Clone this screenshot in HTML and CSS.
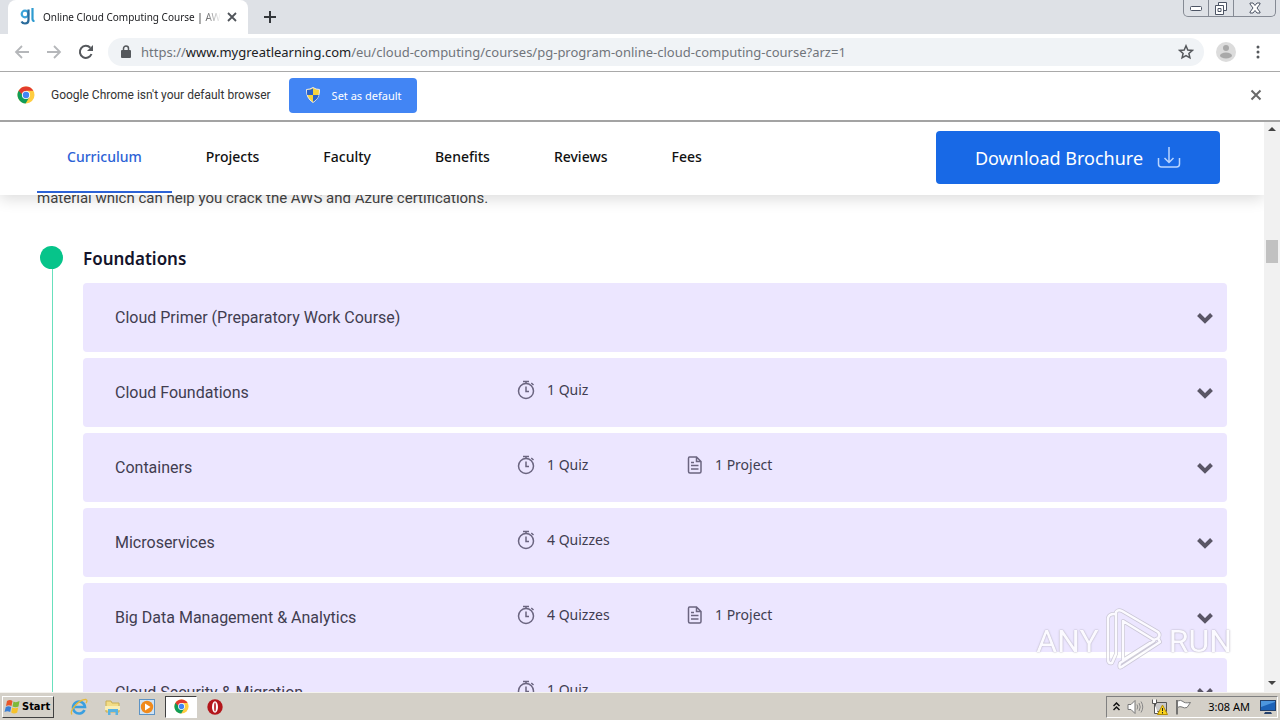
FILE: index.html
```html
<!DOCTYPE html>
<html lang="en">
<head>
<meta charset="utf-8">
<title>Online Cloud Computing Course</title>
<link rel="stylesheet" href="styles.css">
</head>
<body>
<svg class="defs" aria-hidden="true">
  <symbol id="chrome" viewBox="0 0 18 18">
    <circle cx="9" cy="9" r="8.5" fill="#ffcd40"/>
    <path d="M1.600 4.800A8.500 8.500 0 0 0 8.600 17.500L12.500 11 9 9 9 4.800Z" fill="#109d58"/>
    <path d="M1.600 4.800A8.500 8.500 0 0 1 16.400 4.800H9L5.200 8.400Z" fill="#e33b2e"/>
    <circle cx="9" cy="9" r="4.1" fill="#fff"/><circle cx="9" cy="9" r="3.2" fill="#4285f4"/>
  </symbol>
  <symbol id="timer" viewBox="0 0 18 20">
    <g fill="none" stroke="#6b6580" stroke-width="1.5"><circle cx="9" cy="11" r="7.5"/><path d="M9 6.500V11.500H12M6 1.500H12M9 1.500V3M14.300 3 16.500 5"/></g>
  </symbol>
  <symbol id="doc" viewBox="0 0 16 18">
    <g fill="none" stroke="#6b6580" stroke-width="1.500"><path d="M2.500 1H9.500L14 5.500V15.500Q14 17 12.500 17H3Q1.500 17 1.500 15.500V2.500Q1.500 1 2.500 1ZM9.500 1V5.500H14M4 6.500H7M4 9.500H11.500M4 13H11.500"/></g>
  </symbol>
  <symbol id="chev" viewBox="0 0 18 12"><path d="M2.500 2.500 9 9 15.500 2.500" fill="none" stroke="#5a5666" stroke-width="4"/></symbol>
</svg>

<header class="tabs">
  <div class="tab">
    <svg class="favicon" width="16" height="18" viewBox="0 0 16 18"><g fill="none" stroke-width="2.200"><circle cx="5" cy="6" r="3.300" stroke="#3ba4da"/><path d="M8.500 1.500V12Q8.500 15.500 5 15.500Q2.500 15.500 1.500 13.500" stroke="#2b6c9c"/><path d="M12.500 0V11Q12.500 13 14.500 13" stroke="#2e9bd0"/></g></svg>
    <span class="tab-title">Online Cloud Computing Course | AW</span>
    <button class="plain" aria-label="Close tab"><svg width="10" height="10" viewBox="0 0 10 10"><path d="M1 1 9 9M9 1 1 9" stroke="#50545a" stroke-width="1.800"/></svg></button>
  </div>
  <button class="plain new-tab" aria-label="New tab"><svg width="12" height="12" viewBox="0 0 12 12"><path d="M6 0V12M0 6H12" stroke="#33363b" stroke-width="2"/></svg></button>
  <div class="win">
    <button aria-label="Minimize"><svg width="14" height="8" viewBox="0 0 14 8"><rect x="1.500" y="2.500" width="11" height="4" rx="1" fill="#fff" stroke="#4c5464"/></svg></button>
    <button aria-label="Restore"><svg width="14" height="13" viewBox="0 0 14 13"><g fill="#fff" stroke="#4c5464"><path d="M4.500.5H12.500V8.500H4.500Z"/><path d="M1.500 3.500H9.500V12.500H1.500ZM4 6.500H7V9.500H4Z"/></g></svg></button>
    <button class="wide" aria-label="Close window"><svg width="14" height="12" viewBox="0 0 14 12"><path d="M2 1H5L7 3.500 9 1H12V2L9 6 12 10V11H9L7 8.500 5 11H2V10L5 6 2 2Z" fill="#fff" stroke="#4c5464"/></svg></button>
  </div>
</header>

<div class="toolbar">
  <button class="plain" aria-label="Back"><svg width="16" height="16" viewBox="0 0 16 16"><path d="M15 8H2M8 2 2 8 8 14" fill="none" stroke="#b5b7ba" stroke-width="1.800"/></svg></button>
  <button class="plain" aria-label="Forward"><svg width="16" height="16" viewBox="0 0 16 16"><path d="M1 8H14M8 2 14 8 8 14" fill="none" stroke="#b5b7ba" stroke-width="1.800"/></svg></button>
  <button class="plain" aria-label="Reload"><svg width="16" height="16" viewBox="0 0 16 16"><path d="M13.500 10A6 6 0 1 1 12.300 3.800" fill="none" stroke="#55585c" stroke-width="2"/><path d="M15 1V7H9Z" fill="#55585c"/></svg></button>
  <div class="address">
    <svg width="10" height="13" viewBox="0 0 10 13"><rect y="5" width="10" height="8" rx="1" fill="#55585c"/><path d="M2.500 5V3.500a2.500 2.500 0 0 1 5 0V5" fill="none" stroke="#55585c" stroke-width="1.500"/></svg>
    <div class="url">https://<b>www.mygreatlearning.com</b>/eu/cloud-computing/courses/pg-program-online-cloud-computing-course?arz=1</div>
    <button class="plain" aria-label="Bookmark"><svg width="16" height="16" viewBox="0 0 16 16"><path d="M8 1.800 9.800 6 14.300 6.400 10.900 9.400 11.900 13.800 8 11.500 4.100 13.800 5.100 9.400 1.700 6.400 6.200 6Z" fill="none" stroke="#55585c" stroke-width="1.500"/></svg></button>
  </div>
  <button class="plain" aria-label="Profile"><svg width="20" height="20" viewBox="0 0 20 20"><circle cx="10" cy="10" r="10" fill="#dcdcdc"/><circle cx="10" cy="6" r="3" fill="#a9a9a9"/><ellipse cx="10" cy="13.500" rx="6" ry="3" fill="#a9a9a9"/></svg></button>
  <button class="plain dots" aria-label="Menu"><svg width="4" height="14" viewBox="0 0 4 14"><g fill="#55585c"><circle cx="2" cy="2" r="1.500"/><circle cx="2" cy="7" r="1.500"/><circle cx="2" cy="12" r="1.500"/></g></svg></button>
</div>

<div class="infobar">
  <svg width="18" height="18"><use href="#chrome"/></svg>
  <span class="info-text">Google Chrome isn't your default browser</span>
  <button class="default-btn"><svg width="14" height="16" viewBox="0 0 14 16"><path d="M7 .5Q10 2.500 13.500 2.500 14 11 7 15.500 0 11 .5 2.500 4 2.500 7 .5Z" fill="#f5d33c" stroke="#e9e9ee"/><path d="M7 1.500V8H1.200Q.8 6 1 3 4.500 3 7 1.500ZM7 8H12.800Q11.500 12.500 7 14.800Z" fill="#2a62c9"/></svg>Set as default</button>
  <button class="plain info-close" aria-label="Dismiss"><svg width="12" height="12" viewBox="0 0 12 12"><path d="M1.500 1.500 10.500 10.500M10.500 1.500 1.500 10.500" stroke="#6a6a6a" stroke-width="2"/></svg></button>
</div>

<div class="viewport">
  <div class="page">
    <div class="nav">
      <nav>
        <a class="active" href="#c">Curriculum</a><a href="#p">Projects</a><a href="#f">Faculty</a><a href="#b">Benefits</a><a href="#r">Reviews</a><a href="#e">Fees</a>
      </nav>
      <button class="brochure">Download Brochure <svg width="24" height="22" viewBox="0 0 24 22"><path d="M1.500 11V17Q1.500 20 4.500 20H19.500Q22.500 20 22.500 17V11M12 0V15M7.500 11 12 15.500 16.500 11" fill="none" stroke="#b9d5ff" stroke-width="1.500"/></svg></button>
    </div>
    <main>
      <p class="intro">material which can help you crack the AWS and Azure certifications.</p>
      <section class="module">
        <div class="rail"></div>
        <div class="module-body">
          <h2>Foundations</h2>
          <ul>
            <li><span class="name">Cloud Primer (Preparatory Work Course)</span><span class="meta"></span><span class="meta"></span><button class="plain" aria-label="Expand Cloud Primer"><svg width="18" height="12"><use href="#chev"/></svg></button></li>
            <li><span class="name">Cloud Foundations</span><span class="meta"><svg width="18" height="20"><use href="#timer"/></svg>1 Quiz</span><span class="meta"></span><button class="plain" aria-label="Expand Cloud Foundations"><svg width="18" height="12"><use href="#chev"/></svg></button></li>
            <li><span class="name">Containers</span><span class="meta"><svg width="18" height="20"><use href="#timer"/></svg>1 Quiz</span><span class="meta"><svg width="16" height="18"><use href="#doc"/></svg>1 Project</span><button class="plain" aria-label="Expand Containers"><svg width="18" height="12"><use href="#chev"/></svg></button></li>
            <li><span class="name">Microservices</span><span class="meta"><svg width="18" height="20"><use href="#timer"/></svg>4 Quizzes</span><span class="meta"></span><button class="plain" aria-label="Expand Microservices"><svg width="18" height="12"><use href="#chev"/></svg></button></li>
            <li><span class="name">Big Data Management &amp; Analytics</span><span class="meta"><svg width="18" height="20"><use href="#timer"/></svg>4 Quizzes</span><span class="meta"><svg width="16" height="18"><use href="#doc"/></svg>1 Project</span><button class="plain" aria-label="Expand Big Data"><svg width="18" height="12"><use href="#chev"/></svg></button></li>
            <li><span class="name">Cloud Security &amp; Migration</span><span class="meta"><svg width="18" height="20"><use href="#timer"/></svg>1 Quiz</span><span class="meta"></span><button class="plain" aria-label="Expand Cloud Security"><svg width="18" height="12"><use href="#chev"/></svg></button></li>
          </ul>
        </div>
      </section>
    </main>
  </div>
  <div class="scrollbar">
    <svg width="8" height="4" viewBox="0 0 8 4"><path d="M0 4 4 0 8 4Z" fill="#444"/></svg>
    <div class="track"><div class="thumb"></div></div>
    <svg width="8" height="4" viewBox="0 0 8 4"><path d="M0 0 4 4 8 0Z" fill="#444"/></svg>
  </div>
</div>

<footer class="taskbar">
  <button class="start"><svg width="17" height="16" viewBox="0 0 17 16"><path d="M3 2Q6 0 8.500 2L7.500 7Q5 5.500 2 7Z" fill="#e8562a"/><path d="M9.500 2.500Q12 4 15.500 2L14.500 7.500Q11.500 9 8.500 7.500Z" fill="#7db93a"/><path d="M1.800 8Q4.500 6.500 7.200 8L6.200 13Q3.500 11.500.5 13Z" fill="#3a7fd5"/><path d="M8.200 8.500Q11 10 14.200 8.500L13.200 13.500Q10 15.500 7.200 13.500Z" fill="#f6c22b"/></svg>Start</button>
  <div class="quick">
    <button class="plain" aria-label="Internet Explorer"><svg width="18" height="18" viewBox="0 0 18 18"><path d="M14.500 12A6 6 0 1 1 15 9H4.500" fill="none" stroke="#3a9fe0" stroke-width="2.600"/><path d="M2 16.500C-1 13 9 1 16 1.500 17.500 2 17 4 16 5" fill="none" stroke="#e7b93a" stroke-width="1.300"/></svg></button>
    <button class="plain" aria-label="Explorer"><svg width="18" height="18" viewBox="0 0 18 18"><path d="M2 3H7L8 5H15V14H2Z" fill="#f2dc85" stroke="#c9ae55"/><path d="M1 8H16V12H1Z" fill="#f9eeb5"/><path d="M4 17V11H14V17H11.500V14H6.500V17Z" fill="#58b3e2"/></svg></button>
    <button class="plain" aria-label="Media Player"><svg width="18" height="18" viewBox="0 0 18 18"><rect x="1.500" y="1.500" width="15" height="15" fill="#cfe3f5" stroke="#5d93c4"/><circle cx="9" cy="9" r="6.200" fill="#f08a1c"/><path d="M7 5.500 12.500 9 7 12.500Z" fill="#fff"/></svg></button>
    <button class="plain pressed" aria-label="Google Chrome"><svg width="15" height="15"><use href="#chrome"/></svg></button>
    <button class="plain" aria-label="Opera"><svg width="16" height="16" viewBox="0 0 16 16"><circle cx="8" cy="8" r="7.700" fill="#b3161b"/><ellipse cx="8" cy="8" rx="3" ry="5.800" fill="#fff"/><ellipse cx="8" cy="8" rx="1" ry="4.500" fill="#c23a3e"/></svg></button>
  </div>
  <div class="tray">
    <svg width="7" height="9" viewBox="0 0 7 9"><path d="M.5 4 3.500 1 6.500 4M.5 8 3.500 5 6.500 8" fill="none" stroke="#111" stroke-width="1.500"/></svg>
    <svg width="17" height="16" viewBox="0 0 17 16"><path d="M1 5.500H4L8 1.500V14.500L4 10.500H1Z" fill="#fff" stroke="#777"/><path d="M10 5.500Q11.500 8 10 10.500M12 4Q14.500 8 12 12M14 2.500Q17.500 8 14 13.500" fill="none" stroke="#888"/></svg>
    <svg width="17" height="16" viewBox="0 0 17 16"><path d="M4.500 3.500H15.500V12.500H4.500Z" fill="#c9c9c9" stroke="#555"/><path d="M1.500.5V4.500H5.500V.5M3.500 4.500V14.500H7" fill="#fff" stroke="#555"/><path d="M11.500 6 16.500 15.500H6.500Z" fill="#f7d21e" stroke="#b58c00"/><path d="M11.500 9V12M11.500 13V14.500" stroke="#222"/></svg>
    <svg width="17" height="16" viewBox="0 0 17 16"><path d="M2 1V15.500" stroke="#555" stroke-width="1.500"/><path d="M2.500 2Q6 .5 8 2.500 9.500 4.500 15.500 3.500L12 8.500Q9 9.500 7 8 5 7 2.500 8.500Z" fill="#fff" stroke="#777"/></svg>
    <time>3:08 AM</time>
    <svg width="16" height="14" viewBox="0 0 16 14"><rect x=".5" y=".5" width="15" height="10" fill="#1c62b8" stroke="#24406b"/><path d="M1 7 15 2V1H1Z" fill="#4d96df"/><path d="M5 12H11L12 14H4Z" fill="#24406b"/></svg>
  </div>
</footer>

<div class="watermark" aria-hidden="true">
  <span>ANY</span>
  <svg width="60" height="66" viewBox="0 0 60 66"><g fill="none" stroke-linejoin="round" stroke-linecap="round"><path d="M12 46V4Q14 1 18 3L54 24Q57 27 54 30L50 32 19 13V52L46 35M12 46 8 55Q4 56 4 51V10Q5 6 10 6M54 30 56 34 19 58Q14 62 16 55L50 33" stroke="#c4c1ce" stroke-width="4"/><path d="M12 46V4Q14 1 18 3L54 24Q57 27 54 30L50 32 19 13V52L46 35M12 46 8 55Q4 56 4 51V10Q5 6 10 6M54 30 56 34 19 58Q14 62 16 55L50 33" stroke="#fff" stroke-width="2.500"/></g></svg>
  <span>RUN</span>
</div>
</body>
</html>
```
FILE: styles.css
```css
* { box-sizing: border-box; }
body {
  margin: 0;
  height: 100vh;
  display: flex;
  flex-direction: column;
  overflow: hidden;
  position: relative;
  background: #fff;
  color: #3c3c46;
  font-family: "Noto Sans", sans-serif;
}
svg { display: block; flex: none; }
button { font: inherit; cursor: pointer; }
.defs { position: absolute; width: 0; height: 0; }
.plain { display: flex; align-items: center; justify-content: center; border: 0; padding: 0; background: none; }

.tabs { display: flex; align-items: flex-start; height: 34px; padding-left: 8px; background: #dee1e6; }
.tab { display: flex; align-items: center; width: 240px; height: 34px; padding: 0 11px; background: #fff; border-radius: 8px 8px 0 0; }
.favicon { margin: 0 7px 0 1px; }
.tab-title {
  flex: 1;
  margin-right: 6px;
  white-space: nowrap;
  font-size: 10px;
  color: #202124;
  mask-image: linear-gradient(to right, #000 88%, transparent);
}
.new-tab { width: 44px; height: 34px; }
.win { display: flex; margin-left: auto; margin-right: 4px; border: 1px solid #858a94; border-top: 0; border-radius: 0 0 5px 5px; height: 17px; }
.win button { display: flex; align-items: center; justify-content: center; width: 25px; padding: 0; border: 0; border-right: 1px solid #858a94; background: none; }
.win .wide { width: 41px; border-right: 0; }

.toolbar { display: flex; align-items: center; gap: 16px; height: 38px; padding: 0 16px 2px 14px; border-bottom: 1px solid #a9a9a9; }
.address { display: flex; align-items: center; flex: 1; height: 28px; padding: 0 10px 0 13px; margin: 0 -4px 0 -2px; border-radius: 14px; background: #f0f3f6; }
.url { flex: 1; margin-left: 10px; font-size: 13px; line-height: 20px; color: #70757b; white-space: nowrap; overflow: hidden; }
.url b { font-weight: 400; color: #202124; }
.toolbar .dots { width: 12px; }

.infobar { display: flex; align-items: center; height: 50px; padding: 0 18px 2px 17px; border-bottom: 2px solid #a3a3a3; }
.info-text { margin: 0 18px 0 16px; font-family: Roboto, sans-serif; font-size: 12px; color: #333; }
.default-btn { display: flex; align-items: center; gap: 12px; height: 35px; padding: 0 15px 0 17px; border: 0; border-radius: 4px; background: #4285f4; color: #fff; font-size: 11px; }
.info-close { margin-left: auto; }

.viewport { display: flex; flex: 1; min-height: 0; }
.page { flex: 1; min-width: 0; overflow: hidden; }
.nav { position: relative; z-index: 1; display: flex; justify-content: space-between; height: 73px; padding: 0 44px 0 37px; background: #fff; box-shadow: 0 4px 14px rgba(0, 0, 0, 0.14); }
nav { display: flex; gap: 4px; }
nav a { display: flex; align-items: center; height: 71px; padding: 0 30px; border-bottom: 2px solid transparent; font-size: 14px; font-weight: 500; color: #111; text-decoration: none; }
nav .active { color: #2c62d6; border-color: #2c62d6; }
.brochure { display: flex; align-items: center; justify-content: center; gap: 14px; width: 284px; height: 53px; margin-top: 9px; border: 0; border-radius: 4px; background: #1869e6; color: #fff; font-size: 18px; }

main { padding: 0 37px; }
.intro { margin: -7px 0 0; font-family: Roboto, sans-serif; font-size: 15px; line-height: 20px; color: #444; }
.module { display: flex; gap: 20px; margin-top: 38px; padding-left: 3px; }
.rail { width: 23px; background: linear-gradient(#68e0bd, #68e0bd) 12px 0 / 1px 100% no-repeat; }
.rail::before { content: ""; display: block; width: 23px; height: 23px; border-radius: 50%; background: #06c48a; }
.module-body { flex: 1; }
h2 { margin: 0; font-size: 17px; line-height: 26px; font-weight: 600; color: #14142b; }
ul { display: flex; flex-direction: column; gap: 6px; margin: 11px 0 0; padding: 0; list-style: none; }
li { display: grid; grid-template-columns: 402px 170px 1fr auto; align-items: center; height: 69px; padding: 0 13px 0 32px; border-radius: 4px; background: #ece6ff; }
.name { font-family: Roboto, sans-serif; font-size: 16px; line-height: 24px; color: #413d50; }
.meta { display: flex; align-items: center; gap: 12px; padding-bottom: 6px; font-size: 14px; line-height: 20px; color: #413d50; }

.scrollbar { display: flex; flex-direction: column; align-items: center; width: 16px; padding: 5px 0 7px; background: #f1f1f1; }
.track { flex: 1; width: 12px; padding-top: 109px; }
.thumb { height: 23px; background: #c1c1c1; }

.taskbar { display: flex; align-items: center; height: 28px; padding: 0 2px; background: #d4d0c8; border-top: 1px solid #f4f2ee; }
.start { display: flex; align-items: center; gap: 1px; height: 22px; padding: 0 3px 0 1px; background: #d4d0c8; border: 1px solid; border-color: #fff #404040 #404040 #fff; font-family: "DejaVu Sans Condensed", "DejaVu Sans", sans-serif; font-weight: 700; font-size: 11px; color: #000; }
.quick { display: flex; align-items: center; gap: 2px; margin-left: 9px; }
.quick button { width: 32px; height: 22px; }
.quick .pressed { background: #fff; border: 1px solid; border-color: #404040 #fff #fff #404040; }
.tray { display: flex; align-items: center; gap: 7px; height: 22px; margin-left: auto; padding: 0 1px 0 6px; border: 1px solid; border-color: #808080 #fff #fff #808080; }
.tray time { margin: 0 3px 0 9px; font-size: 11px; color: #000; }

.watermark { position: absolute; right: 48px; bottom: 46px; display: flex; align-items: center; gap: 5px; opacity: 0.8; color: #fff; font-family: Roboto, sans-serif; font-size: 32px; text-shadow: 0 0 2px #aaa6b4, 0 0 1px #aaa6b4; pointer-events: none; }
```
